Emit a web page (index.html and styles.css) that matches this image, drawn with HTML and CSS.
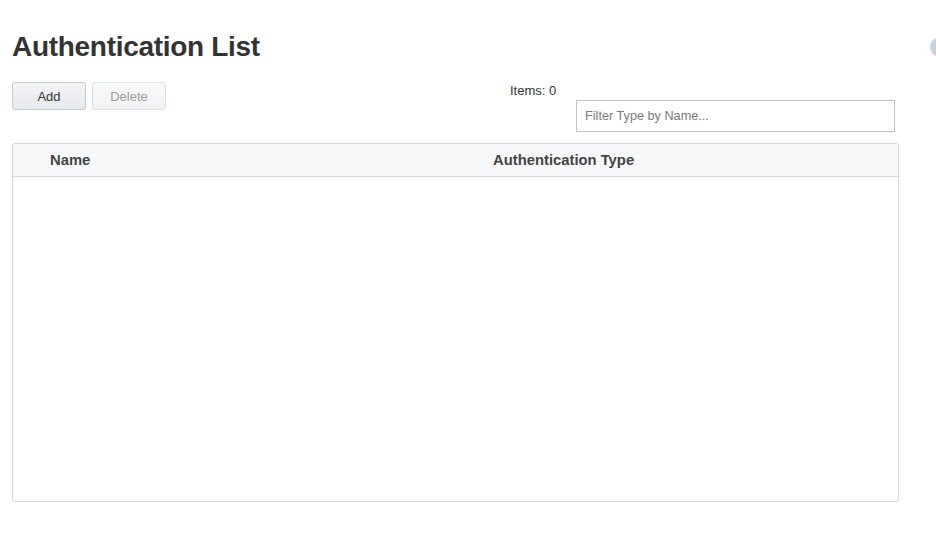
FILE: index.html
```html
<!DOCTYPE html>
<html>
<head>
<meta charset="utf-8">
<link rel="stylesheet" href="styles.css">
</head>
<body>
<div class="page">
  <h1 class="title">Authentication List</h1>
  <div class="toolbar">
    <div class="buttons">
      <button class="btn">Add</button>
      <button class="btn btn-disabled">Delete</button>
    </div>
    <div class="right">
      <div class="count">Items: 0</div>
      <input class="filter" type="text" placeholder="Filter Type by Name...">
    </div>
  </div>
  <div class="table">
    <div class="thead">
      <div class="th th-name">Name</div>
      <div class="th th-type">Authentication Type</div>
    </div>
    <div class="tbody"></div>
  </div>
</div>
<div class="help-dot"></div>
</body>
</html>
```
FILE: styles.css
```css
html, body {
  margin: 0;
  padding: 0;
  background: #fff;
  font-family: "Liberation Sans", Arial, sans-serif;
  color: #333;
  overflow: hidden;
}
.page {
  padding: 0 38px 0 12px;
  width: 886px;
}
.title {
  margin: 0;
  padding-top: 31px;
  font-size: 28px;
  line-height: 32px;
  font-weight: bold;
  color: #333;
  letter-spacing: -0.3px;
}
.toolbar {
  display: flex;
  justify-content: space-between;
  margin-top: 19px;
  height: 61px;
}
.buttons {
  display: flex;
  gap: 6px;
  align-items: flex-start;
}
.btn {
  box-sizing: border-box;
  width: 74px;
  height: 28px;
  border: 1px solid #c5cad1;
  border-radius: 3px;
  background: linear-gradient(#f3f5f7, #e6e9ed);
  font-family: "Liberation Sans", Arial, sans-serif;
  font-size: 13px;
  color: #333;
  padding: 0;
}
.btn-disabled {
  width: 74px;
  border-color: #dcdfe3;
  background: linear-gradient(#fafafa, #f1f2f4);
  color: #9a9a9a;
}
.right {
  display: flex;
  flex-direction: column;
  align-items: flex-start;
  width: 388px;
  margin-right: 0;
  padding-top: 2px;
}
.count {
  font-size: 13px;
  line-height: 14px;
  color: #333;
}
.filter {
  box-sizing: border-box;
  margin-top: 2px;
  margin-left: 66px;
  width: 319px;
  height: 32px;
  border: 1px solid #c4c4c4;
  border-radius: 0;
  padding: 0 8px;
  font-family: "Liberation Sans", Arial, sans-serif;
  font-size: 12.7px;
  color: #333;
  outline: none;
}
.filter::placeholder {
  color: #7a7a7a;
}
.table {
  box-sizing: border-box;
  width: 887px;
  height: 359px;
  border: 1px solid #d4d6d9;
  border-radius: 3px;
  display: flex;
  flex-direction: column;
}
.thead {
  display: grid;
  grid-template-columns: 480px 1fr;
  height: 32px;
  background: #f7f8fa;
  border-bottom: 1px solid #d8dadd;
  border-radius: 3px 3px 0 0;
  align-items: center;
}
.th {
  font-size: 14.8px;
  font-weight: bold;
  color: #444;
}
.th-name {
  padding-left: 37px;
}
.tbody {
  flex: 1;
}
.help-dot {
  position: absolute;
  left: 930px;
  top: 37px;
  width: 20px;
  height: 20px;
  border-radius: 50%;
  background: #c9d3e0;
}
```
